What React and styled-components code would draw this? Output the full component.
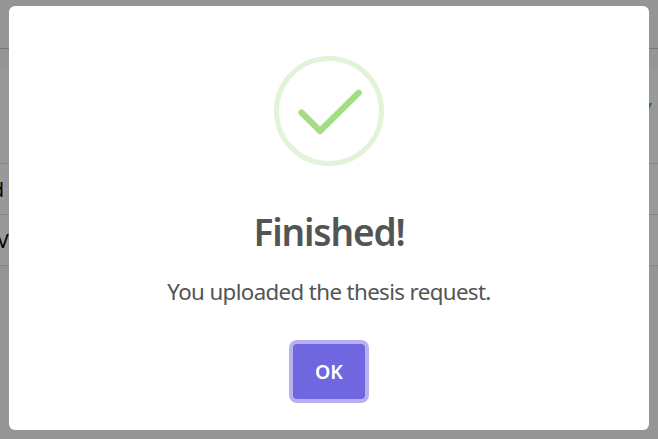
import React from "react";
import styled, { createGlobalStyle } from "styled-components";

const GlobalStyle = createGlobalStyle`
  *, *::before, *::after { box-sizing: border-box; }
  body {
    margin: 0;
    overflow: hidden;
    background: #f6f6f6;
    font-family: "Segoe UI", "Noto Sans", "Open Sans", sans-serif;
  }
`;

const Screen = styled.div`
  position: relative;
  height: 439px;
  overflow: hidden;
`;

const Page = styled.main`
  display: flex;
  flex-direction: column;
  height: 100%;
  background: #f8f8f8;
`;

const TopBar = styled.header`
  height: 49px;
  border-bottom: 1px solid #c6c6c6;
`;

const Spacer = styled.div`
  height: 20px;
`;

const Table = styled.section`
  background: #fff;
`;

const TableRow = styled.div`
  display: flex;
  align-items: center;
  justify-content: ${(p) => (p.$end ? "flex-end" : "flex-start")};
  height: ${(p) => p.$height}px;
  padding-right: 6px;
  padding-bottom: ${(p) => (p.$end ? 17 : 0)}px;
  border-bottom: 1px solid #dedede;
`;

const CellText = styled.span`
  font-size: 19.5px;
  line-height: 30px;
  padding-top: 2px;
  color: #000;
  margin-left: ${(p) => p.$shift}px;
  letter-spacing: -0.4px;
  white-space: nowrap;
`;

const Backdrop = styled.div`
  position: absolute;
  inset: 0;
  display: flex;
  justify-content: center;
  align-items: flex-start;
  padding-top: 6px;
  background: rgba(0, 0, 0, 0.4);
`;

const Dialog = styled.div`
  display: flex;
  flex-direction: column;
  align-items: center;
  width: 640px;
  height: 424px;
  padding-top: 50px;
  border-radius: 6px;
  background: #fff;
`;

const SuccessIcon = styled.svg`
  display: block;
  flex: none;
  width: 110px;
  height: 110px;
`;

const Title = styled.h2`
  margin: 41px 0 0;
  font-size: 37px;
  line-height: 50px;
  font-weight: 600;
  letter-spacing: -1.15px;
  color: #545454;
  white-space: nowrap;
`;

const Message = styled.p`
  margin: 19px 0 0;
  font-size: 22.3px;
  line-height: 32px;
  letter-spacing: -0.62px;
  color: #545454;
  white-space: nowrap;
`;

const ConfirmButton = styled.button`
  width: 72px;
  height: 55px;
  margin-top: 36px;
  padding: 1px 0 0;
  border: 0;
  border-radius: 4px;
  background: #7066e0;
  box-shadow: 0 0 0 4px #b7b2ef;
  color: #fff;
  font: 600 19.5px/54px "Segoe UI", "Noto Sans", "Open Sans", sans-serif;
`;

export default function App() {
  return (
    <Screen>
      <GlobalStyle />
      <Page>
        <TopBar />
        <Spacer />
        <Table>
          <TableRow $height={95} $end>
            <svg width="12" height="10" viewBox="0 0 12 10" aria-hidden="true">
              <path d="M0 0H12.5L6.5 10Z" fill="#20bdee" />
            </svg>
          </TableRow>
          <TableRow $height={51}>
            <CellText $shift={-8}>d</CellText>
          </TableRow>
          <TableRow $height={51}>
            <CellText $shift={-3}>Ve</CellText>
          </TableRow>
        </Table>
      </Page>
      <Backdrop>
        <Dialog role="dialog" aria-modal="true" aria-labelledby="dialog-title">
          <SuccessIcon viewBox="0 0 110 110" fill="none" aria-hidden="true">
            <circle cx="55" cy="55" r="52.5" stroke="#e1f3d9" strokeWidth="5" />
            <path
              d="M27.5 56.5L46 75L84.7 36.7"
              stroke="#a5dc86"
              strokeWidth="6.2"
              strokeLinecap="round"
              strokeLinejoin="round"
            />
          </SuccessIcon>
          <Title id="dialog-title">Finished!</Title>
          <Message>You uploaded the thesis request.</Message>
          <ConfirmButton type="button">OK</ConfirmButton>
        </Dialog>
      </Backdrop>
    </Screen>
  );
}
